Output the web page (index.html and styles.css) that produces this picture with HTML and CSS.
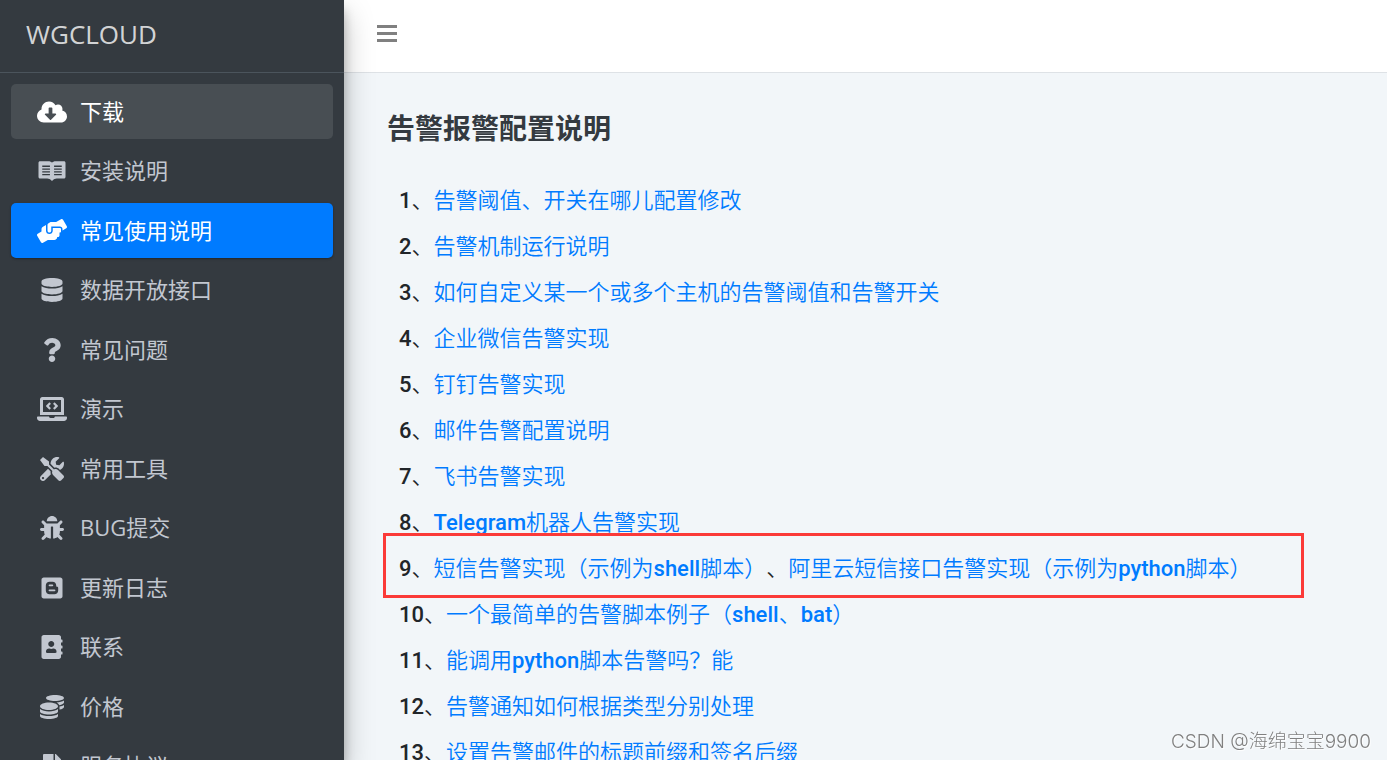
FILE: index.html
```html
<!DOCTYPE html>
<html lang="zh-CN">
<head>
    <meta charset="UTF-8">
    <meta name="viewport" content="width=device-width, initial-scale=1.0">
    <title>WGCLOUD - 告警报警配置说明</title>
    <link rel="stylesheet" href="styles.css">
</head>
<body>

    <div class="wrapper">
        <aside class="sidebar">
            <a class="brand" href="#">WGCLOUD</a>
            <nav>
                <ul class="menu">
                    <li><a class="menu-link hover" href="#">
                        <svg class="icon" viewBox="0 0 640 512"><path d="M537.6 226.6c4.1-10.7 6.4-22.4 6.4-34.6 0-53-43-96-96-96-19.7 0-38.1 6-53.3 16.2C367 64.2 315.3 32 256 32c-88.4 0-160 71.6-160 160 0 2.7.1 5.4.2 8.1C40.2 219.8 0 273.2 0 336c0 79.5 64.5 144 144 144h368c70.7 0 128-57.3 128-128 0-61.9-44-113.6-102.4-125.4zm-132.9 88.7L299.3 420.7c-6.2 6.2-16.4 6.2-22.6 0L171.3 315.3c-10.1-10.1-2.9-27.3 11.3-27.3H248V176c0-8.8 7.2-16 16-16h48c8.8 0 16 7.2 16 16v112h65.4c14.2 0 21.4 17.2 11.3 27.3z"/></svg>
                        下载
                    </a></li>
                    <li><a class="menu-link" href="#">
                        <svg class="icon" viewBox="0 0 576 512"><path fill-rule="evenodd" d="M32 48H210c35 0 62 12 78 32 16-20 43-32 78-32h178c18 0 32 14 32 32v304c0 18-14 32-32 32H390c-35 0-62 14-102 52-40-38-67-52-102-52H32c-18 0-32-14-32-32V80c0-18 14-32 32-32zM80 140v28h164v-28zM80 200v28h164v-28zM80 260v28h164v-28zM80 320v28h164v-28zM332 140v28h164v-28zM332 200v28h164v-28zM332 260v28h164v-28zM332 320v28h164v-28z"/></svg>
                        安装说明
                    </a></li>
                    <li><a class="menu-link active" href="#">
                        <svg class="icon" viewBox="0 0 640 512"><path d="M488 192H336v56c0 39.7-32.3 72-72 72s-72-32.3-72-72V126.4l-64.9 39C107.8 176.9 96 197.8 96 220.2v47.3l-80 46.2C.7 322.5-4.6 342.1 4.3 357.4l80 138.6c8.8 15.3 28.4 20.5 43.7 11.7L231.4 448H368c35.3 0 64-28.7 64-64h16c17.7 0 32-14.3 32-32v-64h8c13.3 0 24-10.7 24-24v-48c0-13.3-10.7-24-24-24zm147.7-37.4L555.7 16C546.9.7 527.3-4.5 512 4.3L408.6 64H306.4c-12 0-23.7 3.4-33.9 9.7L239 94.6c-9.4 5.8-15 16.1-15 27.1V248c0 22.1 17.9 40 40 40s40-17.9 40-40v-88h184c30.9 0 56 25.1 56 56v28.5l80-46.2c15.3-8.9 20.5-28.4 11.7-43.7z"/></svg>
                        常见使用说明
                    </a></li>
                    <li><a class="menu-link" href="#">
                        <svg class="icon" viewBox="0 0 448 512"><path d="M448 73.143v45.714C448 159.143 347.667 192 224 192S0 159.143 0 118.857V73.143C0 32.857 100.333 0 224 0s224 32.857 224 73.143zM448 176v102.857C448 319.143 347.667 352 224 352S0 319.143 0 278.857V176c48.125 33.143 136.208 48.572 224 48.572S399.874 209.143 448 176zm0 160v102.857C448 479.143 347.667 512 224 512S0 479.143 0 438.857V336c48.125 33.143 136.208 48.572 224 48.572S399.874 369.143 448 336z"/></svg>
                        数据开放接口
                    </a></li>
                    <li><a class="menu-link" href="#">
                        <svg class="icon" viewBox="0 0 384 512"><path d="M202.021 0C122.202 0 70.503 32.703 29.914 91.026c-7.363 10.58-5.093 25.086 5.178 32.874l43.138 32.709c10.373 7.865 25.132 6.026 33.253-4.148 25.049-31.381 43.63-49.449 82.757-49.449 30.764 0 68.816 19.799 68.816 49.631 0 22.552-18.617 34.134-48.993 51.164-35.423 19.86-82.299 44.576-82.299 106.405V320c0 13.255 10.745 24 24 24h72.471c13.255 0 24-10.745 24-24v-5.773c0-42.86 125.268-44.645 125.268-160.627C377.504 66.256 286.902 0 202.021 0zM192 373.459c-38.196 0-69.271 31.075-69.271 69.271 0 38.195 31.075 69.27 69.271 69.27s69.271-31.075 69.271-69.271-31.075-69.27-69.271-69.27z"/></svg>
                        常见问题
                    </a></li>
                    <li><a class="menu-link" href="#">
                        <svg class="icon" viewBox="0 0 640 512"><path d="M255.03 261.65c6.25 6.25 16.38 6.25 22.63 0l11.31-11.31c6.25-6.25 6.25-16.38 0-22.63L253.25 192l35.71-35.72c6.25-6.25 6.25-16.38 0-22.63l-11.31-11.31c-6.25-6.25-16.38-6.25-22.63 0l-58.34 58.34c-6.25 6.25-6.25 16.38 0 22.63l58.35 58.34zm96.01-11.3l11.31 11.31c6.25 6.25 16.38 6.25 22.63 0l58.34-58.34c6.25-6.25 6.25-16.38 0-22.63l-58.34-58.34c-6.25-6.25-16.38-6.25-22.63 0l-11.31 11.31c-6.25 6.25-6.25 16.38 0 22.63L386.75 192l-35.71 35.72c-6.25 6.25-6.25 16.38 0 22.63zM624 416H381.54c-.74 19.81-14.71 32-32.74 32H288c-18.69 0-33.02-17.47-32.77-32H16c-8.8 0-16 7.2-16 16v16c0 35.2 28.8 64 64 64h512c35.2 0 64-28.8 64-64v-16c0-8.8-7.2-16-16-16zM576 48c0-26.4-21.6-48-48-48H112C85.6 0 64 21.6 64 48v336h512V48zm-64 272H128V64h384v256z"/></svg>
                        演示
                    </a></li>
                    <li><a class="menu-link" href="#">
                        <svg class="icon" viewBox="0 0 512 512"><path d="M501.1 395.7L384 278.6c-23.1-23.1-57.6-27.6-85.4-13.9L192 158.1V96L64 0 0 64l96 128h62.1l106.6 106.6c-13.6 27.8-9.2 62.3 13.9 85.4l117.1 117.1c14.6 14.6 38.2 14.6 52.7 0l52.7-52.7c14.5-14.6 14.5-38.2 0-52.7zM331.7 225c28.3 0 54.9 11 74.9 31l19.4 19.4c15.8-6.9 30.8-16.5 43.8-29.5 37.1-37.1 49.7-89.3 37.9-136.7-2.2-9-13.5-12.1-20.1-5.5l-74.4 74.4-67.9-11.3L334 98.9l74.4-74.4c6.6-6.6 3.4-17.9-5.7-20.2-47.4-11.7-99.6.9-136.6 37.9-28.5 28.5-41.9 66.1-41.2 103.6l82.1 82.1c8.1-1.9 16.5-2.9 24.7-2.9zm-103.9 82l-56.7-56.7L18.7 402.8c-25 25-25 65.5 0 90.5s65.5 25 90.5 0l123.6-123.6c-7.6-19.9-9.9-41.6-5-62.7zM64 472c-13.2 0-24-10.8-24-24 0-13.3 10.7-24 24-24s24 10.7 24 24c0 13.2-10.7 24-24 24z"/></svg>
                        常用工具
                    </a></li>
                    <li><a class="menu-link" href="#">
                        <svg class="icon" viewBox="0 0 512 512"><path d="M511.988 288.9c-.478 17.43-15.217 31.1-32.653 31.1H424v16c0 21.864-4.882 42.584-13.6 61.145l60.228 60.228c12.496 12.497 12.496 32.758 0 45.255-12.498 12.497-32.759 12.496-45.256 0l-54.736-54.736C345.886 467.965 314.351 480 280 480V236c0-6.627-5.373-12-12-12h-24c-6.627 0-12 5.373-12 12v244c-34.351 0-65.886-12.035-90.636-32.108l-54.736 54.736c-12.498 12.497-32.759 12.496-45.256 0-12.496-12.497-12.496-32.758 0-45.255l60.228-60.228C92.882 378.584 88 357.864 88 336v-16H32.666C15.23 320 .491 306.33.013 288.9-.484 270.816 13.453 256 31.5 256H88v-58.745l-46.628-46.628c-12.496-12.497-12.496-32.758 0-45.255 12.498-12.497 32.758-12.497 45.256 0L141.255 160h229.489l54.627-54.627c12.498-12.497 32.758-12.497 45.256 0 12.496 12.497 12.496 32.758 0 45.255L424 197.255V256h56.5c18.047 0 31.984 14.816 31.488 32.9zM257 0c-61.856 0-112 50.144-112 112h224C369 50.144 318.856 0 257 0z"/></svg>
                        BUG提交
                    </a></li>
                    <li><a class="menu-link" href="#">
                        <svg class="icon" viewBox="0 0 448 512"><path fill-rule="evenodd" d="M48 32h352c27 0 48 21 48 48v352c0 27-21 48-48 48H48c-27 0-48-21-48-48V80c0-27 21-48 48-48zM172 124c-46 0-80 34-80 80v104c0 46 34 80 80 80h104c46 0 80-34 80-80v-52c0-20-8-26-24-26-14 0-18-8-18-26 0-46-32-80-78-80zM172 180h58c28 0 28 38 0 38h-58c-26 0-26-38 0-38zM172 286h104c28 0 28 40 0 40H172c-28 0-28-40 0-40z"/></svg>
                        更新日志
                    </a></li>
                    <li><a class="menu-link" href="#">
                        <svg class="icon" viewBox="0 0 448 512"><path d="M436 160c6.6 0 12-5.4 12-12v-40c0-6.6-5.4-12-12-12h-20V48c0-26.5-21.5-48-48-48H48C21.5 0 0 21.5 0 48v416c0 26.5 21.5 48 48 48h320c26.5 0 48-21.5 48-48v-48h20c6.6 0 12-5.4 12-12v-40c0-6.6-5.4-12-12-12h-20v-64h20c6.6 0 12-5.4 12-12v-40c0-6.6-5.4-12-12-12h-20v-64h20zm-228-32c35.3 0 64 28.7 64 64s-28.7 64-64 64-64-28.7-64-64 28.7-64 64-64zm112 236.8c0 10.6-10 19.2-22.4 19.2H118.4C106 384 96 375.4 96 364.8v-19.2c0-31.8 30.1-57.6 67.2-57.6h5c12.3 5.1 25.7 8 39.8 8s27.6-2.9 39.8-8h5c37.1 0 67.2 25.8 67.2 57.6v19.2z"/></svg>
                        联系
                    </a></li>
                    <li><a class="menu-link" href="#">
                        <svg class="icon" viewBox="0 0 512 512"><path d="M0 405.3V448c0 35.3 86 64 192 64s192-28.7 192-64v-42.7C342.7 434.4 267.2 448 192 448S41.3 434.4 0 405.3zM320 128c106 0 192-28.7 192-64S426 0 320 0 128 28.7 128 64s86 64 192 64zM0 300.4V352c0 35.3 86 64 192 64s192-28.7 192-64v-51.6c-41.3 34-116.9 51.6-192 51.6S41.3 334.4 0 300.4zm416 11c57.3-11.1 96-31.7 96-55.4v-42.7c-23.2 16.4-57.3 27.6-96 34.5v63.6zM192 160C86 160 0 195.8 0 240s86 80 192 80 192-35.8 192-80-86-80-192-80zm219.3 56.3c60-10.8 100.7-32 100.7-56.3v-42.7c-35.5 25.1-96.5 38.6-160.7 41.8 29.5 14.3 51.2 33.5 60 57.2z"/></svg>
                        价格
                    </a></li>
                    <li><a class="menu-link" href="#">
                        <svg class="icon" viewBox="0 0 384 512"><path d="M224 136V0H24C10.7 0 0 10.7 0 24v464c0 13.3 10.7 24 24 24h336c13.3 0 24-10.7 24-24V160H248c-13.2 0-24-10.8-24-24zM384 121.9v6.1H256V0h6.1c6.4 0 12.5 2.5 17 7l97.9 98c4.5 4.5 7 10.6 7 16.9z"/></svg>
                        服务协议
                    </a></li>
                </ul>
            </nav>
        </aside>

        <div class="page">
            <header class="topbar">
                <button class="toggle" type="button" aria-label="菜单">
                    <svg viewBox="0 0 20 18"><path d="M0 0h20v3H0zM0 7h20v3H0zM0 14h20v3H0z"/></svg>
                </button>
            </header>

            <main class="content">
                <h1>告警报警配置说明</h1>
                <ul class="topics">
                    <li>1、<a href="#">告警阈值、开关在哪儿配置修改</a></li>
                    <li>2、<a href="#">告警机制运行说明</a></li>
                    <li>3、<a href="#">如何自定义某一个或多个主机的告警阈值和告警开关</a></li>
                    <li>4、<a href="#">企业微信告警实现</a></li>
                    <li>5、<a href="#">钉钉告警实现</a></li>
                    <li>6、<a href="#">邮件告警配置说明</a></li>
                    <li>7、<a href="#">飞书告警实现</a></li>
                    <li>8、<a href="#">Telegram机器人告警实现</a></li>
                    <li class="marked">9、<a href="#">短信告警实现（示例为shell脚本）</a>、<a href="#">阿里云短信接口告警实现（示例为python脚本）</a></li>
                    <li>10、<a href="#">一个最简单的告警脚本例子（shell、bat）</a></li>
                    <li>11、<a href="#">能调用python脚本告警吗？能</a></li>
                    <li>12、<a href="#">告警通知如何根据类型分别处理</a></li>
                    <li>13、<a href="#">设置告警邮件的标题前缀和签名后缀</a></li>
                </ul>
            </main>
        </div>
    </div>

    <div class="watermark">CSDN @海绵宝宝9900</div>

</body>
</html>
```
FILE: styles.css
```css
* {
    box-sizing: border-box;
}

body {
    margin: 0;
    overflow: hidden;
    font-family: "Open Sans", "Noto Sans CJK SC", sans-serif;
    font-size: 22px;
    line-height: 33px;
    color: #212529;
    background-color: #f2f6f9;
}

a {
    color: #007bff;
    text-decoration: none;
}

ul {
    list-style: none;
    margin: 0;
    padding: 0;
}

.wrapper {
    display: flex;
    height: 100vh;
    overflow: hidden;
}

/* Sidebar */
.sidebar {
    position: relative;
    z-index: 2;
    flex: 0 0 344px;
    overflow: hidden;
    background-color: #343a40;
    box-shadow: 0 14px 28px rgba(0, 0, 0, 0.25), 0 10px 10px rgba(0, 0, 0, 0.22);
}

.brand {
    display: flex;
    align-items: center;
    height: 73px;
    padding: 0 26px 4px;
    border-bottom: 1px solid #4b545c;
    font-size: 26px;
    color: rgba(255, 255, 255, 0.8);
}

.menu {
    padding: 11px;
}

.menu li {
    margin-bottom: 4px;
}

.menu li:nth-child(even) {
    margin-bottom: 5px;
}

.menu-link {
    display: flex;
    align-items: center;
    gap: 10px;
    padding: 11px 23px;
    border-radius: 5px;
    color: #c2c7d0;
}

.menu-link.hover {
    background-color: #484e53;
    color: #fff;
}

.menu-link.active {
    background-color: #007bff;
    color: #fff;
    box-shadow: 0 1px 3px rgba(0, 0, 0, 0.12), 0 1px 2px rgba(0, 0, 0, 0.24);
}

.icon {
    width: 36px;
    height: 24px;
    fill: currentColor;
}

/* Main area */
.page {
    flex: 1;
    min-width: 0;
}

.topbar {
    display: flex;
    align-items: center;
    height: 73px;
    padding: 0 33px 4px;
    background-color: #fff;
    border-bottom: 1px solid #dee2e6;
}

.toggle {
    padding: 0;
    border: none;
    background: none;
    cursor: pointer;
}

.toggle svg {
    display: block;
    width: 20px;
    height: 18px;
    fill: #808080;
}

.content {
    padding: 38px 43px;
}

.content h1 {
    margin: 0 0 33px;
    font-size: 28px;
    line-height: 34px;
    font-weight: 700;
    color: #343a40;
}

.topics {
    padding-left: 12px;
    font-family: "Roboto Medium", "Open Sans", "Noto Sans CJK SC DemiLight", "Noto Sans CJK SC", sans-serif;
    text-spacing-trim: space-all;
}

.topics li {
    line-height: 46px;
    white-space: nowrap;
}

.marked {
    position: relative;
}

.marked::after {
    content: "";
    position: absolute;
    top: -13px;
    bottom: -6px;
    left: -16px;
    right: 40px;
    border: 3px solid #fb3a38;
    pointer-events: none;
}

.watermark {
    position: fixed;
    right: 16px;
    bottom: 3px;
    font-family: Inter, "Noto Sans CJK SC", sans-serif;
    font-size: 19px;
    line-height: 30px;
    font-weight: 300;
    color: #808080;
    text-shadow: 1px 1px 1px #fff;
}
```
